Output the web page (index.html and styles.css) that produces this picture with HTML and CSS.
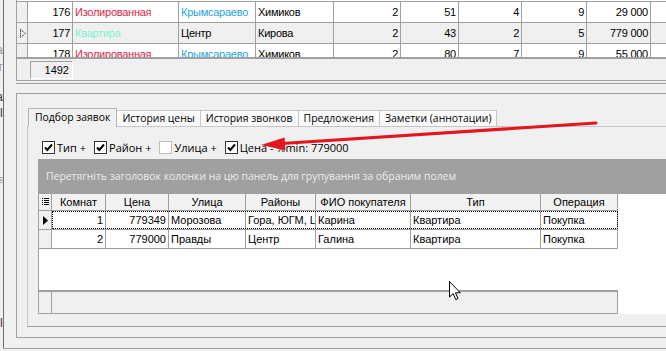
FILE: index.html
```html
<!DOCTYPE html>
<html lang="ru">
<head>
<meta charset="utf-8">
<title>Подбор заявок</title>
<link rel="stylesheet" href="styles.css">
</head>
<body>
<div class="screen">
  <div class="edge">
    <span class="frag f-a">а</span>
    <span class="frag f-t">т</span>
    <span class="frag f-b dark">а</span>
    <span class="frag f-c dark">I</span>
    <span class="frag f-d">≡</span>
    <span class="frag f-e dark">I</span>
  </div>
  <div class="main">
    <div class="topgrid">
      <div class="trows">
        <div class="trow">
          <div class="tc ind"></div>
          <div class="tc w-num r">176</div>
          <div class="tc w-type c-red">Изолированная</div>
          <div class="tc w-dist c-blue">Крымсараево</div>
          <div class="tc w-street">Химиков</div>
          <div class="tc w-n1 r">2</div>
          <div class="tc w-n2 r">51</div>
          <div class="tc w-n3 r">4</div>
          <div class="tc w-n4 r">9</div>
          <div class="tc w-n5 r">29 000</div>
          <div class="tc w-rest"></div>
        </div>
        <div class="trow sel">
          <div class="tc ind"><svg class="ind-cur" width="6" height="9" viewBox="0 0 6 9"><polygon points="0.5,0.5 5.5,4.5 0.5,8.5" fill="none" stroke="#000" stroke-width="1" stroke-dasharray="1 1"/></svg></div>
          <div class="tc w-num r">177</div>
          <div class="tc w-type c-aqua">Квартира</div>
          <div class="tc w-dist">Центр</div>
          <div class="tc w-street">Кирова</div>
          <div class="tc w-n1 r">2</div>
          <div class="tc w-n2 r">43</div>
          <div class="tc w-n3 r">2</div>
          <div class="tc w-n4 r">5</div>
          <div class="tc w-n5 r">779 000</div>
          <div class="tc w-rest"></div>
        </div>
        <div class="trow">
          <div class="tc ind"></div>
          <div class="tc w-num r">178</div>
          <div class="tc w-type c-red">Изолированная</div>
          <div class="tc w-dist c-blue">Крымсараево</div>
          <div class="tc w-street">Химиков</div>
          <div class="tc w-n1 r">2</div>
          <div class="tc w-n2 r">80</div>
          <div class="tc w-n3 r">7</div>
          <div class="tc w-n4 r">9</div>
          <div class="tc w-n5 r">55 000</div>
          <div class="tc w-rest"></div>
        </div>
      </div>
      <div class="tfoot"><div class="sum">1492</div></div>
    </div>
    <div class="splitter"></div>
    <div class="group">
      <div class="tabs">
        <div class="tab active">Подбор заявок</div>
        <div class="tab">История цены</div>
        <div class="tab">История звонков</div>
        <div class="tab">Предложения</div>
        <div class="tab">Заметки (аннотации)</div>
      </div>
      <div class="page">
        <div class="filters">
          <label class="chk"><span class="box on"><svg width="11" height="11" viewBox="0 0 11 11"><path d="M2 5.5 L4.3 8 L9 2.5" fill="none" stroke="#000" stroke-width="2"/></svg></span><span class="lbl">Тип +</span></label>
          <label class="chk"><span class="box on"><svg width="11" height="11" viewBox="0 0 11 11"><path d="M2 5.5 L4.3 8 L9 2.5" fill="none" stroke="#000" stroke-width="2"/></svg></span><span class="lbl">Район +</span></label>
          <label class="chk"><span class="box off"></span><span class="lbl">Улица +</span></label>
          <label class="chk"><span class="box on"><svg width="11" height="11" viewBox="0 0 11 11"><path d="M2 5.5 L4.3 8 L9 2.5" fill="none" stroke="#000" stroke-width="2"/></svg></span><span class="lbl">Цена - %min: 779000</span></label>
        </div>
        <div class="grouppanel">Перетягніть заголовок колонки на цю панель для групування за обраним полем</div>
        <div class="grid">
          <div class="gtable">
            <div class="grow ghead">
              <div class="gc gi"><svg width="7" height="8" viewBox="0 0 7 8"><g fill="#000"><rect x="0" y="0" width="1" height="1"/><rect x="2" y="0" width="5" height="1"/><rect x="0" y="2" width="1" height="1"/><rect x="2" y="2" width="5" height="1"/><rect x="0" y="4" width="1" height="1"/><rect x="2" y="4" width="5" height="1"/><rect x="0" y="6" width="1" height="1"/><rect x="2" y="6" width="5" height="1"/></g></svg></div>
              <div class="gc k1 ctr">Комнат</div>
              <div class="gc k2 ctr">Цена</div>
              <div class="gc k3 ctr">Улица</div>
              <div class="gc k4 ctr">Районы</div>
              <div class="gc k5 ctr">ФИО покупателя</div>
              <div class="gc k6 ctr">Тип</div>
              <div class="gc k7 ctr">Операция</div>
            </div>
            <div class="grow">
              <div class="gc gi"><svg width="5" height="9" viewBox="0 0 5 9"><polygon points="0,0 5,4.5 0,9" fill="#000"/></svg></div>
              <div class="cells focus">
                <div class="gc k1 r">1</div>
                <div class="gc k2 r">779349</div>
                <div class="gc k3">Морозова</div>
                <div class="gc k4">Гора, ЮГМ, Ц</div>
                <div class="gc k5">Карина</div>
                <div class="gc k6">Квартира</div>
                <div class="gc k7">Покупка</div>
              </div>
            </div>
            <div class="grow">
              <div class="gc gi"></div>
              <div class="cells">
                <div class="gc k1 r">2</div>
                <div class="gc k2 r">779000</div>
                <div class="gc k3">Правды</div>
                <div class="gc k4">Центр</div>
                <div class="gc k5">Галина</div>
                <div class="gc k6">Квартира</div>
                <div class="gc k7">Покупка</div>
              </div>
            </div>
          </div>
          <div class="gfoot"><div class="fi"></div></div>
        </div>
      </div>
    </div>
  </div>
  <svg class="arrow" width="666" height="351" viewBox="0 0 666 351">
    <line x1="282" y1="143.5" x2="596" y2="123" stroke="#e3161d" stroke-width="3.2" stroke-linecap="round"/>
    <polygon points="261,145 284.6,137.4 285.4,150.2" fill="#e3161d"/>
  </svg>
  <svg class="cursor" width="13" height="20" viewBox="0 0 13 20">
    <path d="M0.5 0.5 L0.5 16 L4.2 12.6 L6.8 18.6 L9 17.6 L6.5 11.8 L11.3 11.8 Z" fill="#fff" stroke="#000" stroke-width="1" stroke-linejoin="miter"/>
  </svg>
</div>
</body>
</html>
```
FILE: styles.css
```css
* { box-sizing: border-box; }
html, body { margin: 0; padding: 0; }
body {
  background: #f0f0f0;
  font-family: "Liberation Sans", Arial, sans-serif;
  color: #000;
}
.screen {
  position: relative;
  width: 666px;
  height: 351px;
  overflow: hidden;
  display: flex;
  background: #f0f0f0;
}

/* clipped fragments at the far left */
.edge {
  width: 3px;
  flex: none;
  display: flex;
  flex-direction: column;
  overflow: hidden;
  color: #9a9a9a;
  font-size: 12px;
  line-height: 14px;
}
.frag { display: flex; justify-content: flex-end; height: 14px; white-space: nowrap; }
.frag.dark { color: #4a3a3a; }
.f-a { margin-top: 43px; }
.f-t { margin-top: 3px; }
.f-b { margin-top: 16px; }
.f-c { margin-top: 2px; }
.f-d { margin-top: 53px; }
.f-e { margin-top: 129px; }

.main {
  flex: 1;
  min-width: 0;
  height: 349px;
  border-left: 1px solid #6e6e6e;
  border-bottom: 1px solid #a0a0a0;
  display: flex;
  flex-direction: column;
}

/* ---------- upper grid ---------- */
.topgrid {
  margin-left: 12px;
  height: 81px;
  border-left: 1px solid #a0a0a0;
  border-bottom: 1px solid #a0a0a0;
  flex: none;
}
.trows {
  height: 57px;
  overflow: hidden;
  background: #fff;
  padding-top: 1px;
}
.trow {
  display: flex;
  height: 21px;
  border-bottom: 1px solid #a0a0a0;
  font-size: 11px;
  letter-spacing: -0.25px;
  line-height: 20px;
}
.trow:first-child { border-top: 1px solid #a0a0a0; height: 22px; }
.trow.sel { background: #f0f0f0; }
.tc {
  flex: none;
  border-right: 1px solid #a0a0a0;
  padding: 0 2px;
  white-space: nowrap;
  overflow: hidden;
}
.tc.r { text-align: right; }
.tc.ind { width: 11px; background: #f0f0f0; padding: 0; display: flex; align-items: center; justify-content: center; }
.ind-cur { margin-left: 1px; }
.w-num { width: 45px; }
.w-type { width: 106px; }
.w-dist { width: 77px; }
.w-street { width: 78px; }
.w-n1 { width: 67px; }
.w-n2 { width: 58px; }
.w-n3 { width: 63px; }
.w-n4 { width: 65px; }
.w-n5 { width: 64px; }
.w-rest { flex: 1; border-right: none; }
.c-red { color: #dc1e48; }
.c-blue { color: #22a6e2; }
.c-aqua { color: #7ff0d2; }

.tfoot {
  height: 23px;
  border-top: 2px solid #a0a0a0;
  padding: 2px 0 0 13px;
}
.sum {
  width: 43px;
  height: 18px;
  border-top: 1px solid #a0a0a0;
  border-left: 1px solid #a0a0a0;
  border-right: 1px solid #fff;
  border-bottom: 1px solid #fff;
  text-align: right;
  padding-right: 3px;
  font-size: 11px;
  line-height: 16px;
}

.splitter {
  flex: none;
  margin: 2px 0 0 12px;
  height: 10px;
  border-top: 1px solid #a0a0a0;
}

/* ---------- lower group with tabs ---------- */
.group {
  flex: none;
  margin-left: 12px;
  height: 245px;
  border-top: 1px solid #a0a0a0;
  border-left: 1px solid #a0a0a0;
  border-bottom: 1px solid #a0a0a0;
  padding: 14px 0 10px 10px;
}
.tabs {
  display: flex;
  align-items: flex-end;
  height: 18px;
  padding-left: 1px;
  position: relative;
  z-index: 1;
  font-family: "Open Sans", "Noto Sans", sans-serif;
  font-size: 10.4px;
}
.tab {
  height: 16px;
  line-height: 14px;
  padding: 0 5px;
  border: 1px solid #c6c6c6;
  border-bottom: none;
  background: #fafafa;
  white-space: nowrap;
}
.tab + .tab { margin-left: -1px; }
.tab.active {
  height: 19px;
  line-height: 17px;
  margin-bottom: -1px;
  padding: 0 6px;
  background: #f0f0f0;
  border-color: #b4b4b4;
  position: relative;
  z-index: 2;
}
.page {
  height: 201px;
  border-top: 1px solid #c6c6c6;
  border-left: 1px solid #c6c6c6;
  border-bottom: 1px solid #a0a0a0;
  padding: 14px 0 12px 10px;
}

.filters {
  display: flex;
  align-items: center;
  height: 13px;
  margin-bottom: 5px;
  padding-left: 4px;
  font-family: "Open Sans", "Noto Sans", sans-serif;
  font-size: 11px;
  white-space: nowrap;
}
.chk { display: flex; align-items: center; gap: 2px; margin-right: 8px; }
.box {
  width: 13px;
  height: 13px;
  background: #fff;
  display: flex;
  align-items: center;
  justify-content: center;
}
.box.on { border: 1px solid #333; }
.box.off { border: 1px solid #bdbdbd; }
.lbl { line-height: 13px; }

.grouppanel {
  height: 35px;
  background: #a0a0a0;
  color: #ececec;
  padding-left: 8px;
  line-height: 35px;
  font-family: "Open Sans", "Noto Sans", sans-serif;
  font-size: 10.4px;
  white-space: nowrap;
}

.grid {
  height: 120px;
  background: #fff;
  border-left: 1px solid #a0a0a0;
  display: flex;
  flex-direction: column;
  font-size: 11px;
}
.gtable { width: 579px; }
.grow { display: flex; height: 19px; line-height: 18px; }
.ghead { height: 17px; line-height: 16px; background: #f2f2f2; }
.cells { display: flex; }
.cells.focus { outline: 1px dotted #000; outline-offset: -1px; height: 18px; }
.gc {
  flex: none;
  border-right: 1px solid #a0a0a0;
  border-bottom: 1px solid #a0a0a0;
  padding: 0 2px;
  white-space: nowrap;
  overflow: hidden;
}
.cells .gc { height: 19px; }
.gc.r { text-align: right; }
.gc.ctr { text-align: center; }
.gi {
  width: 13px;
  background: #f0f0f0;
  display: flex;
  align-items: center;
  justify-content: center;
  padding: 0;
}
.k1 { width: 54px; }
.k2 { width: 63px; }
.k3 { width: 77px; }
.k4 { width: 70px; }
.k5 { width: 95px; }
.k6 { width: 130px; }
.k7 { width: 77px; }

.gfoot {
  margin-top: auto;
  width: 579px;
  height: 24px;
  background: #f0f0f0;
  border-top: 2px solid #a0a0a0;
  border-right: 1px solid #a0a0a0;
  border-bottom: 1px solid #a0a0a0;
  display: flex;
}
.gfoot .fi { width: 13px; border-right: 1px solid #a0a0a0; }

/* overlays */
.arrow { position: absolute; left: 0; top: 0; pointer-events: none; }
.cursor { position: absolute; left: 449px; top: 281px; pointer-events: none; }
```
